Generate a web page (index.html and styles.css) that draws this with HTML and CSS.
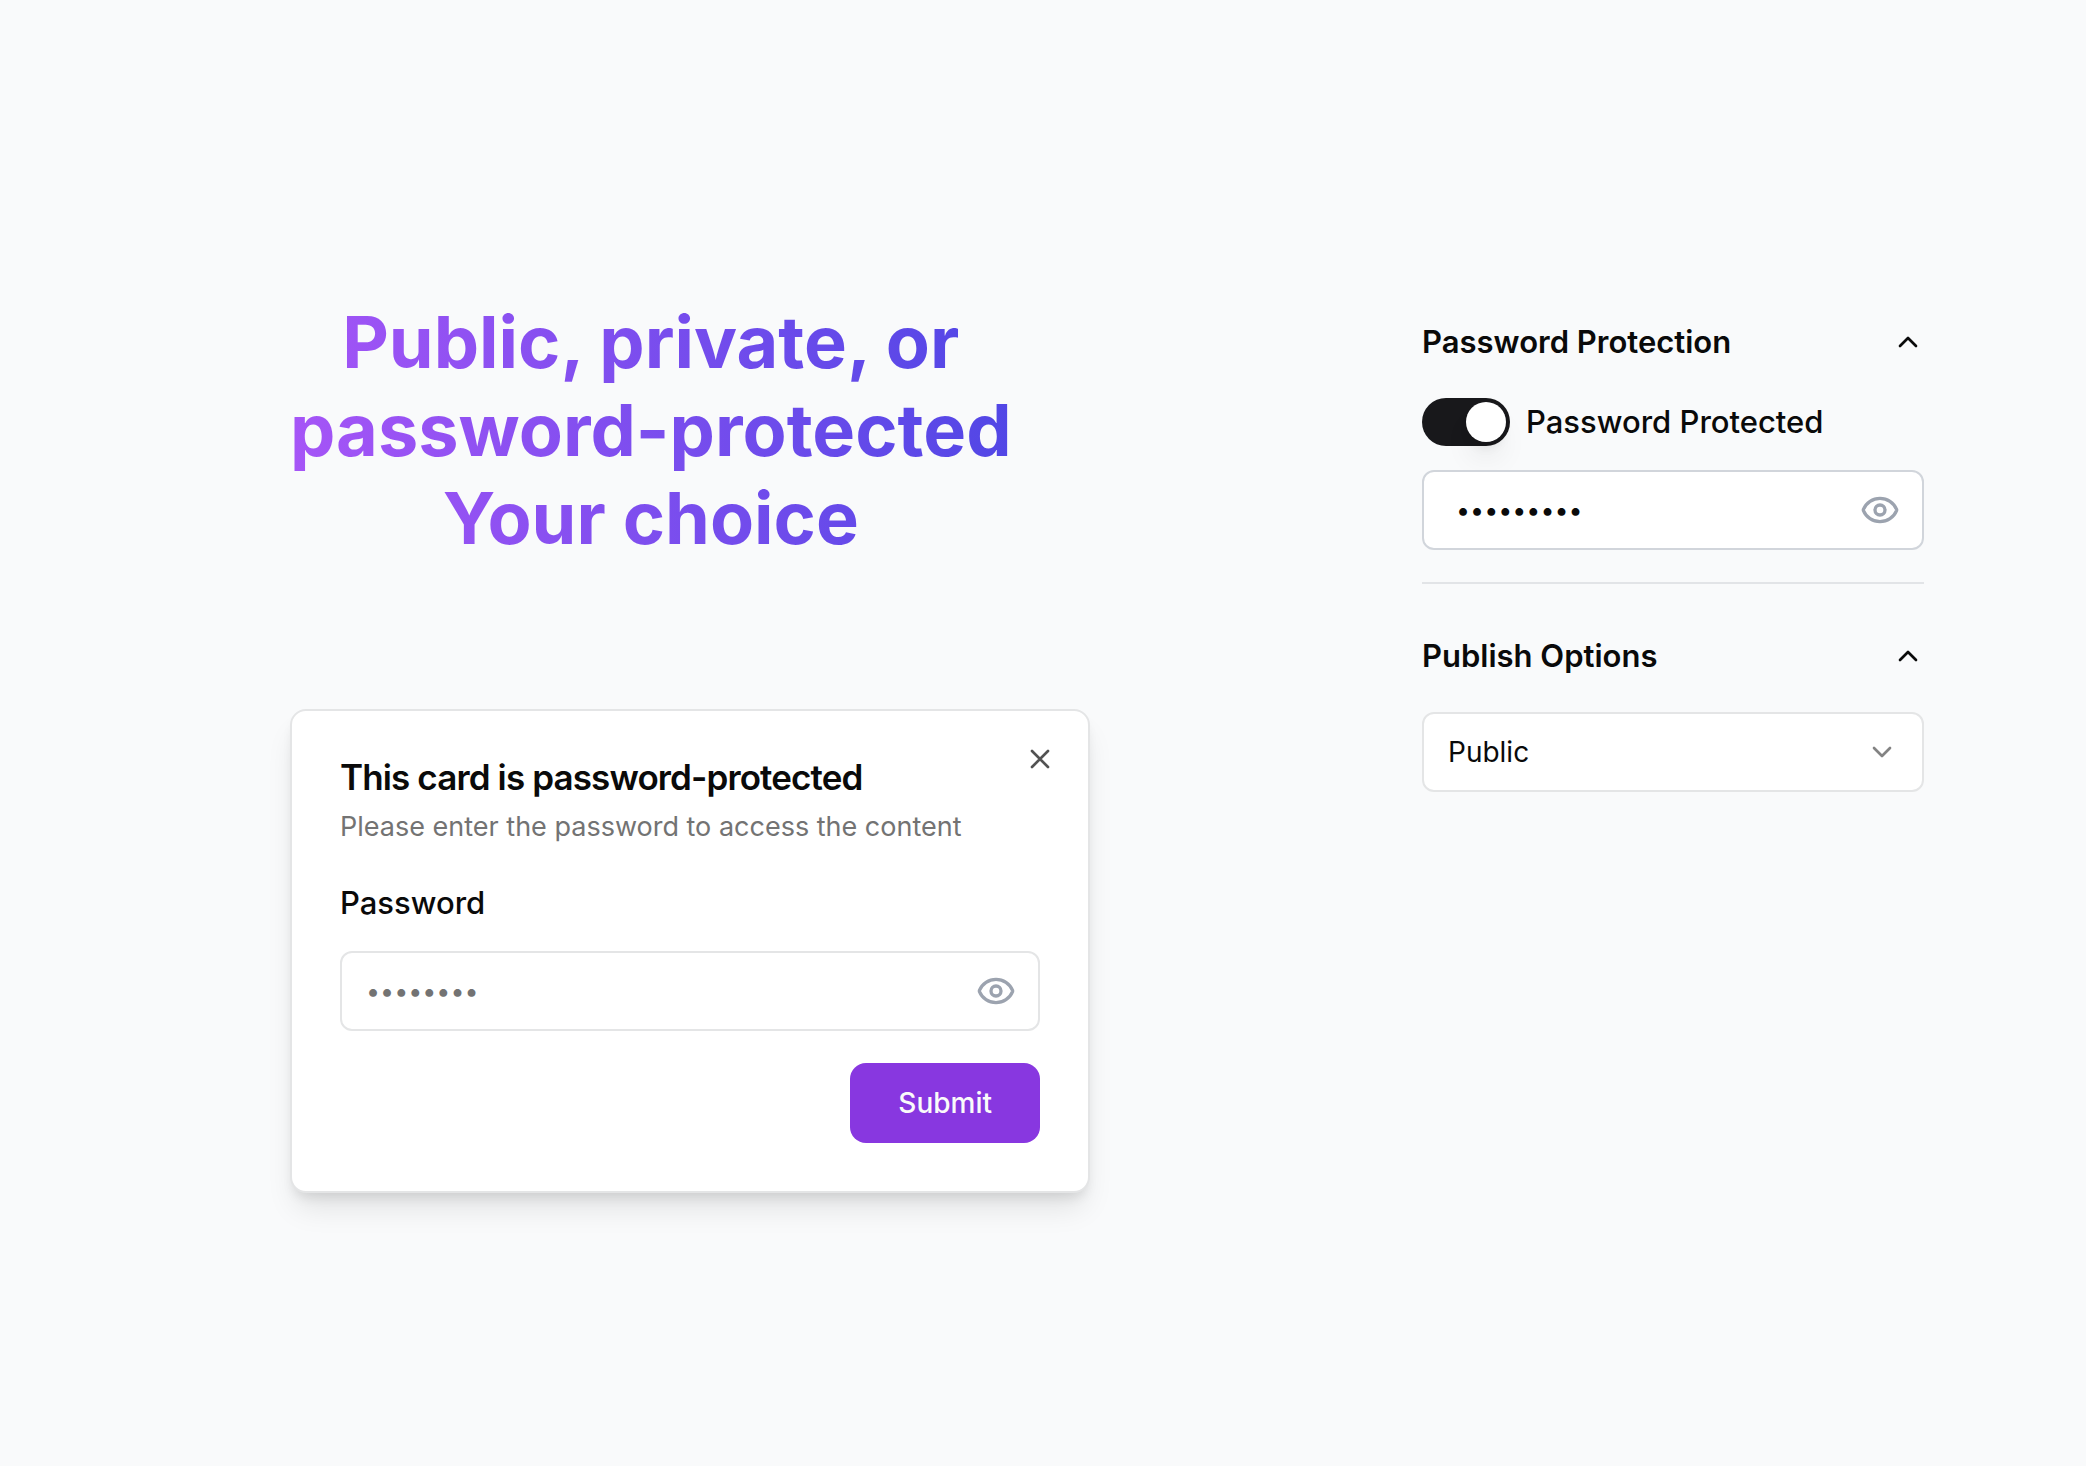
FILE: index.html
```html
<!DOCTYPE html>
<html lang="en">
<head>
<meta charset="utf-8">
<meta name="viewport" content="width=device-width, initial-scale=1">
<title>Password-protected cards</title>
<link rel="stylesheet" href="styles.css">
</head>
<body>
<svg class="sprite" aria-hidden="true">
  <symbol id="eye" viewBox="0 0 24 24"><path d="M2.062 12.348a1 1 0 0 1 0-.696 10.75 10.75 0 0 1 19.876 0 1 1 0 0 1 0 .696 10.75 10.75 0 0 1-19.876 0"/><circle cx="12" cy="12" r="3"/></symbol>
  <symbol id="up" viewBox="0 0 24 24"><path d="m18 15-6-6-6 6"/></symbol>
  <symbol id="down" viewBox="0 0 24 24"><path d="m6 9 6 6 6-6"/></symbol>
  <symbol id="close" viewBox="0 0 24 24"><path d="M18 6 6 18M6 6l12 12"/></symbol>
</svg>
<main class="page">
  <section class="intro">
    <h1 class="headline">Public, private, or<br>password-protected<br>Your choice</h1>
    <div class="card">
      <button class="icon-button card-close" type="button" aria-label="Close"><svg class="icon"><use href="#close"/></svg></button>
      <header class="card-header">
        <h2 class="card-title">This card is password-protected</h2>
        <p class="card-text">Please enter the password to access the content</p>
      </header>
      <form class="card-form">
        <label class="label" for="card-password">Password</label>
        <div class="field">
          <input class="input input-password" id="card-password" type="password" placeholder="••••••••">
          <button class="icon-button reveal" type="button" aria-label="Show password"><svg class="icon icon-large"><use href="#eye"/></svg></button>
        </div>
        <button class="submit" type="submit">Submit</button>
      </form>
    </div>
  </section>
  <aside class="settings">
    <section class="group divided">
      <h2 class="group-title"><button class="group-toggle" type="button" aria-expanded="true">Password Protection<svg class="icon"><use href="#up"/></svg></button></h2>
      <div class="group-body">
        <div class="switch-row">
          <input class="switch" id="protected" type="checkbox" role="switch" checked>
          <label class="label" for="protected">Password Protected</label>
        </div>
        <div class="field">
          <input class="input input-password input-strong" type="password" value="open-card" aria-label="Card password">
          <button class="icon-button reveal" type="button" aria-label="Show password"><svg class="icon icon-large"><use href="#eye"/></svg></button>
        </div>
      </div>
    </section>
    <section class="group">
      <h2 class="group-title"><button class="group-toggle" type="button" aria-expanded="true">Publish Options<svg class="icon"><use href="#up"/></svg></button></h2>
      <div class="field">
        <select class="input select" aria-label="Visibility"><option>Public</option><option>Private</option></select>
        <svg class="icon select-arrow" aria-hidden="true"><use href="#down"/></svg>
      </div>
    </section>
  </aside>
</main>
</body>
</html>
```
FILE: styles.css
```css
* { box-sizing: border-box; }

body {
  margin: 0;
  min-height: 100vh;
  background: #f9fafb;
  color: #0a0a0a;
  font-family: Inter, "Liberation Sans", sans-serif;
  font-size: 28px;
}

h1, h2, p { margin: 0; }

button, input, select { font: inherit; color: inherit; }

button {
  padding: 0;
  border: 0;
  background: none;
  cursor: pointer;
}

.sprite { display: none; }

.icon {
  display: block;
  flex: none;
  width: 32px;
  height: 32px;
  fill: none;
  stroke: currentColor;
  stroke-width: 2;
  stroke-linecap: round;
  stroke-linejoin: round;
}

.icon-large { width: 40px; height: 40px; }

.page {
  display: grid;
  grid-template-columns: 800fr 502fr;
  align-items: start;
  gap: 332px;
  padding: 298px 162px 64px 290px;
}

.intro {
  display: flex;
  flex-direction: column;
  gap: 147px;
}

.headline {
  align-self: flex-start;
  background: linear-gradient(82deg, #a855f7, #4f46e5);
  background-clip: text;
  -webkit-background-clip: text;
  color: transparent;
  font-size: 72px;
  font-weight: 700;
  line-height: 88px;
  text-align: center;
}

.card {
  position: relative;
  padding: 48px;
  border: 2px solid #e4e5e6;
  border-radius: 16px;
  background: #fff;
  box-shadow: 0 20px 30px -6px rgb(0 0 0 / 10%), 0 8px 12px -4px rgb(0 0 0 / 10%);
}

.card-close {
  position: absolute;
  top: 32px;
  right: 32px;
  opacity: .7;
}

.card-header {
  display: grid;
  gap: 12px;
  margin-bottom: 40px;
}

.card-title {
  font-size: 35px;
  font-weight: 600;
  line-height: 36px;
  letter-spacing: -0.025em;
}

.card-text { color: #737373; font-size: 27px; line-height: 40px; }

.card-form { display: grid; gap: 32px; }

.label {
  font-size: 31px;
  font-weight: 500;
  line-height: 32px;
}

.field { position: relative; }

.input {
  display: block;
  width: 100%;
  height: 80px;
  padding: 0 88px 0 24px;
  border: 2px solid #e4e5e6;
  border-radius: 12px;
  background: #fff;
}

.input::placeholder { color: #737373; opacity: 1; }

.input-password { font-size: 25px; }

.input-strong { padding-left: 32px; border-color: #d1d5db; }

.reveal {
  position: absolute;
  top: 20px;
  right: 24px;
  color: #9ca3af;
}

.submit {
  justify-self: end;
  height: 80px;
  padding: 0 48px;
  border-radius: 16px;
  background: #8837e0;
  color: #fafafa;
  font-weight: 500;
}

.settings {
  display: grid;
  gap: 48px;
  padding-top: 20px;
}

.group { display: grid; gap: 32px; }

.divided {
  padding-bottom: 32px;
  border-bottom: 2px solid #e2e4e7;
}

.group-title { font-size: 31px; font-weight: 600; line-height: 48px; }

.group-toggle {
  display: flex;
  align-items: center;
  justify-content: space-between;
  width: 100%;
}

.group-body { display: grid; gap: 24px; }

.switch-row { display: flex; align-items: center; gap: 16px; }

.switch {
  appearance: none;
  display: flex;
  justify-content: flex-end;
  width: 88px;
  height: 48px;
  margin: 0;
  padding: 4px;
  border-radius: 24px;
  background: #18181b;
}

.switch::before {
  content: "";
  width: 40px;
  height: 40px;
  border-radius: 50%;
  background: #fff;
  box-shadow: 0 20px 30px -6px rgb(0 0 0 / 10%), 0 8px 12px -4px rgb(0 0 0 / 10%);
}

.switch:not(:checked) { justify-content: flex-start; background: #d4d4d8; }

.select { appearance: none; }

.select-arrow {
  position: absolute;
  top: 24px;
  right: 26px;
  opacity: .5;
  pointer-events: none;
}
```
